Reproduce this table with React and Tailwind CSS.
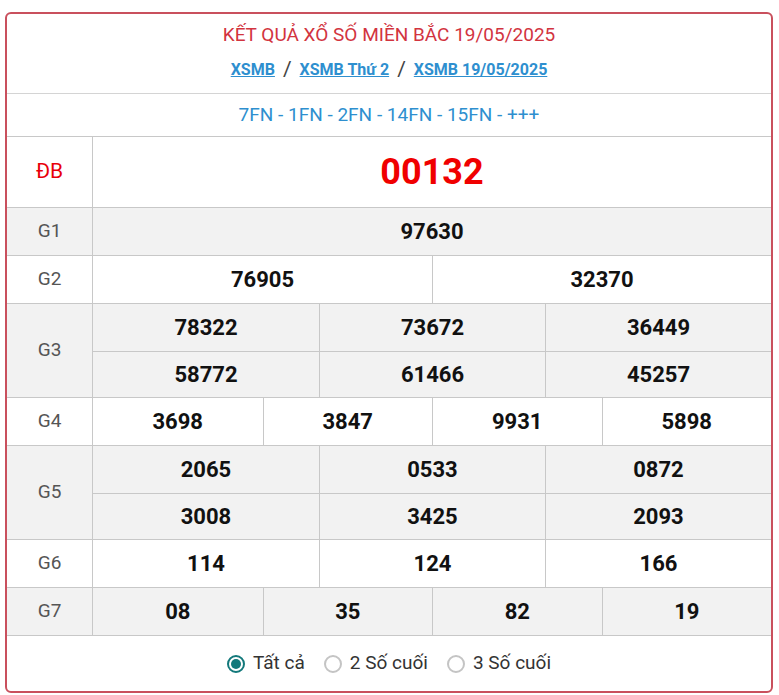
import React from 'react'

const rows = [
  { label: 'G1', lines: [['97630']], bg: 'bg-[#f2f2f2]' },
  { label: 'G2', lines: [['76905', '32370']], bg: 'bg-white' },
  { label: 'G3', lines: [['78322', '73672', '36449'], ['58772', '61466', '45257']], bg: 'bg-[#f2f2f2]' },
  { label: 'G4', lines: [['3698', '3847', '9931', '5898']], bg: 'bg-white' },
  { label: 'G5', lines: [['2065', '0533', '0872'], ['3008', '3425', '2093']], bg: 'bg-[#f2f2f2]' },
  { label: 'G6', lines: [['114', '124', '166']], bg: 'bg-white' },
  { label: 'G7', lines: [['08', '35', '82', '19']], bg: 'bg-[#f2f2f2]' },
]

const cols = {
  1: 'grid-cols-1',
  2: 'grid-cols-2',
  3: 'grid-cols-3',
  4: 'grid-cols-4',
}

function Radio({ checked, label }) {
  return (
    <label className="flex items-center gap-[8px] cursor-pointer">
      {checked ? (
        <span className="w-[18px] h-[18px] rounded-full border-2 border-[#13797b] flex items-center justify-center">
          <span className="w-[10px] h-[10px] rounded-full bg-[#13797b]" />
        </span>
      ) : (
        <span className="w-[18px] h-[18px] rounded-full border-2 border-[#c4c4c4] bg-white" />
      )}
      <span>{label}</span>
    </label>
  )
}

export default function App() {
  return (
    <div className="min-h-screen bg-white pt-[12px] pl-[5px] pr-[6px] font-['Roboto',sans-serif]">
      <div className="w-[768px] border-2 border-[#c9505d] rounded-[6px] overflow-hidden bg-white">
        <div className="h-[80px] flex flex-col items-center border-b border-[#d4d4d4]">
          <h1 className="mt-[8px] text-[19px] leading-[26px] text-[#d2343f]">
            KẾT QUẢ XỔ SỐ MIỀN BẮC 19/05/2025
          </h1>
          <div className="mt-[6px] flex items-center gap-[8px] text-[16px] font-bold text-[#2e8fcf]">
            <a href="#" className="underline">XSMB</a>
            <span className="text-[21px] font-normal text-[#444]">/</span>
            <a href="#" className="underline">XSMB Thứ 2</a>
            <span className="text-[21px] font-normal text-[#444]">/</span>
            <a href="#" className="underline">XSMB 19/05/2025</a>
          </div>
        </div>
        <div className="h-[43px] flex items-center justify-center border-b border-[#c8c8c8] text-[19px] text-[#2e8fcf]">
          7FN - 1FN - 2FN - 14FN - 15FN - +++
        </div>

        <div className="flex h-[71px] border-b border-[#c8c8c8]">
          <div className="w-[86px] shrink-0 flex items-center justify-center border-r border-[#c8c8c8] text-[21px] text-[#e8000a]">
            ĐB
          </div>
          <div className="flex-1 flex items-center justify-center text-[36px] font-bold text-[#f00000]">
            00132
          </div>
        </div>

        {rows.map((row) => (
          <div key={row.label} className={`flex border-b border-[#c8c8c8] ${row.bg}`}>
            <div className="w-[86px] shrink-0 flex items-center justify-center border-r border-[#c8c8c8] text-[19px] text-[#555]">
              {row.label}
            </div>
            <div className="flex-1 flex flex-col">
              {row.lines.map((line, i) => (
                <div
                  key={i}
                  className={`grid ${cols[line.length]} ${i > 0 ? 'h-[46px] border-t border-[#c8c8c8]' : 'h-[47px]'}`}
                >
                  {line.map((n, j) => (
                    <div
                      key={j}
                      className={`flex items-center justify-center text-[22px] font-bold text-[#111] ${j > 0 ? 'border-l border-[#c8c8c8]' : ''}`}
                    >
                      {n}
                    </div>
                  ))}
                </div>
              ))}
            </div>
          </div>
        ))}

        <div className="h-[55px] flex items-center justify-center gap-[19px] text-[19px] text-[#333]">
          <Radio checked label="Tất cả" />
          <Radio label="2 Số cuối" />
          <Radio label="3 Số cuối" />
        </div>
      </div>
    </div>
  )
}
